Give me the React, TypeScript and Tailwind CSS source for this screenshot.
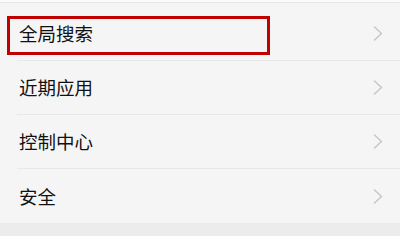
import React from 'react';

const items = ['全局搜索', '近期应用', '控制中心', '安全'];

const Chevron = () => (
  <svg width="10" height="15" viewBox="0 0 10 15" fill="none">
    <polyline points="1.5,1 8.5,7.5 1.5,14" stroke="#c6c6c6" strokeWidth="1.5" strokeLinecap="round" strokeLinejoin="round" />
  </svg>
);

export default function App() {
  return (
    <div className="relative w-[400px] h-[236px] bg-[#f5f5f5] flex flex-col overflow-hidden font-['Noto_Sans_CJK_SC',sans-serif]">
      {/* top edge */}
      <div className="h-[2px] bg-[#fafafa]" />
      <div className="h-[1px] bg-[#e9e9e9]" />

      <div className="pt-[4px] flex flex-col">
        {items.map((label, i) => (
          <div key={label} className="h-[54px] pl-[17px] flex">
            <div
              className={`flex-1 flex items-center justify-between pl-[2px] pr-[17px] ${
                i < items.length - 1 ? 'border-b border-[#e8e8e8]' : ''
              }`}
            >
              <span className="text-[18.5px] leading-none text-[#111111]">{label}</span>
              <Chevron />
            </div>
          </div>
        ))}
      </div>

      {/* bottom band */}
      <div className="flex-1 bg-[#ececec]" />

      {/* highlight box */}
      <div className="absolute left-[7px] top-[16px] w-[263px] h-[39px] border-[3px] border-[#c10000]" />
    </div>
  );
}
